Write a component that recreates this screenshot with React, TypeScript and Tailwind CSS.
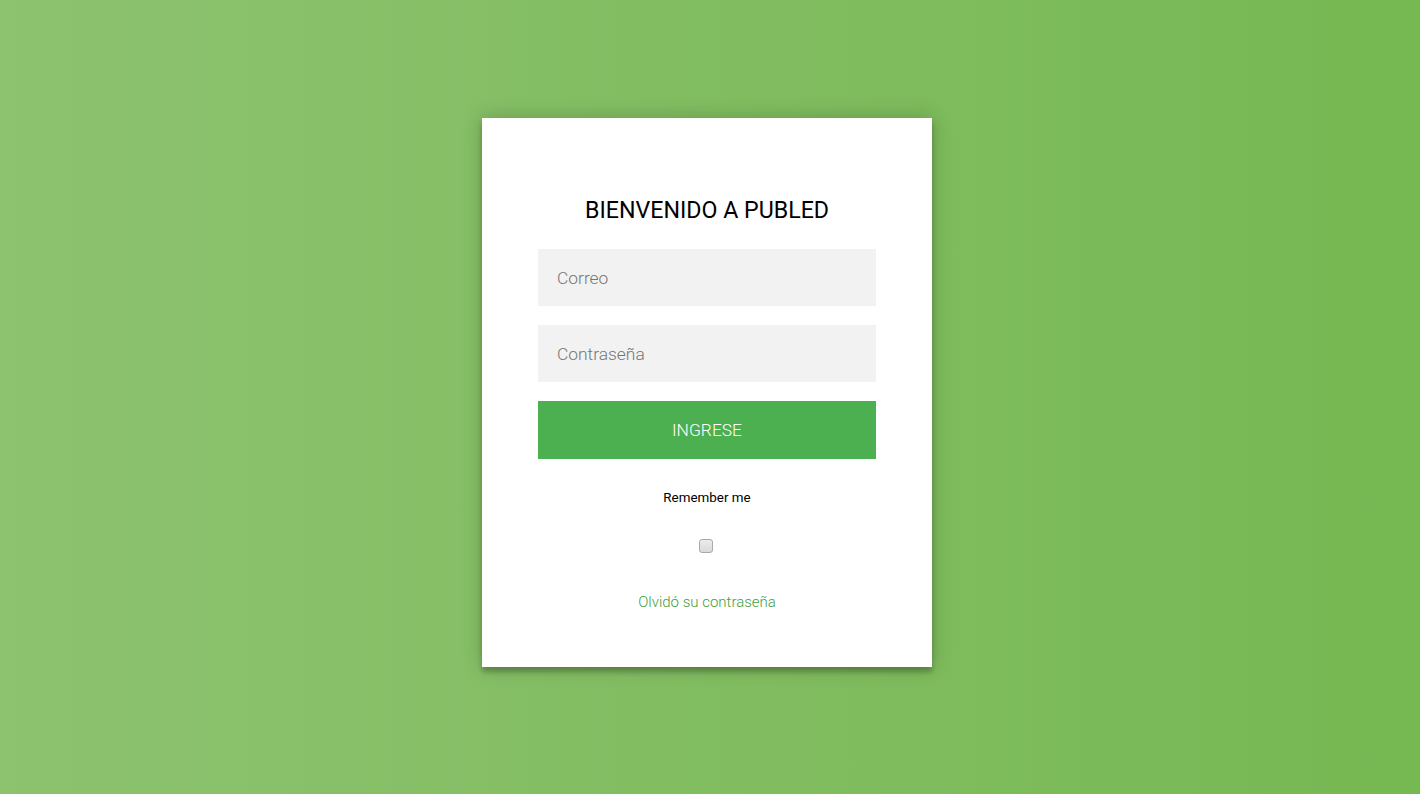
export default function App() {
  return (
    <div className="flex h-[794px] w-full items-start justify-center bg-gradient-to-r from-[#8dc26f] to-[#76b852] font-['Roboto',sans-serif]">
      <div className="mr-[6px] mt-[118px] flex w-[450px] flex-col bg-white px-[56px] pb-[55px] pt-[79px] shadow-[0_0_20px_0_rgba(0,0,0,0.2),0_5px_5px_0_rgba(0,0,0,0.24)]">
        <h1 className="mb-[25px] text-center text-[23.2px] leading-[27px] font-normal text-black">
          BIENVENIDO A PUBLED
        </h1>
        <form className="flex flex-col" onSubmit={(e) => e.preventDefault()}>
          <input
            type="email"
            placeholder="Correo"
            className="h-[57px] w-full bg-[#f2f2f2] px-[19px] text-[17.4px] font-light text-[#555] outline-none placeholder:text-[#757575]"
          />
          <input
            type="password"
            placeholder="Contraseña"
            className="mt-[19px] h-[57px] w-full bg-[#f2f2f2] px-[19px] text-[17.4px] font-light text-[#555] outline-none placeholder:text-[#757575]"
          />
          <button
            type="submit"
            className="mt-[19px] h-[58px] w-full bg-[#4caf50] text-[17.4px] font-light uppercase text-white"
          >
            Ingrese
          </button>
          <label className="mt-[29px] text-center text-[13.4px] leading-[20px] text-black">
            Remember me
          </label>
          <div className="mt-[31px] flex justify-center">
            <input
              type="checkbox"
              className="mr-[2px] h-[14px] w-[14px] appearance-none rounded-[3px] border border-[#a9a9a9] bg-gradient-to-b from-[#ececec] to-[#d9d9d9]"
            />
          </div>
          <a
            href="#"
            className="mt-[39px] text-center text-[15px] leading-[20px] font-light text-[#3f9e43]"
          >
            Olvidó su contraseña
          </a>
        </form>
      </div>
    </div>
  );
}
